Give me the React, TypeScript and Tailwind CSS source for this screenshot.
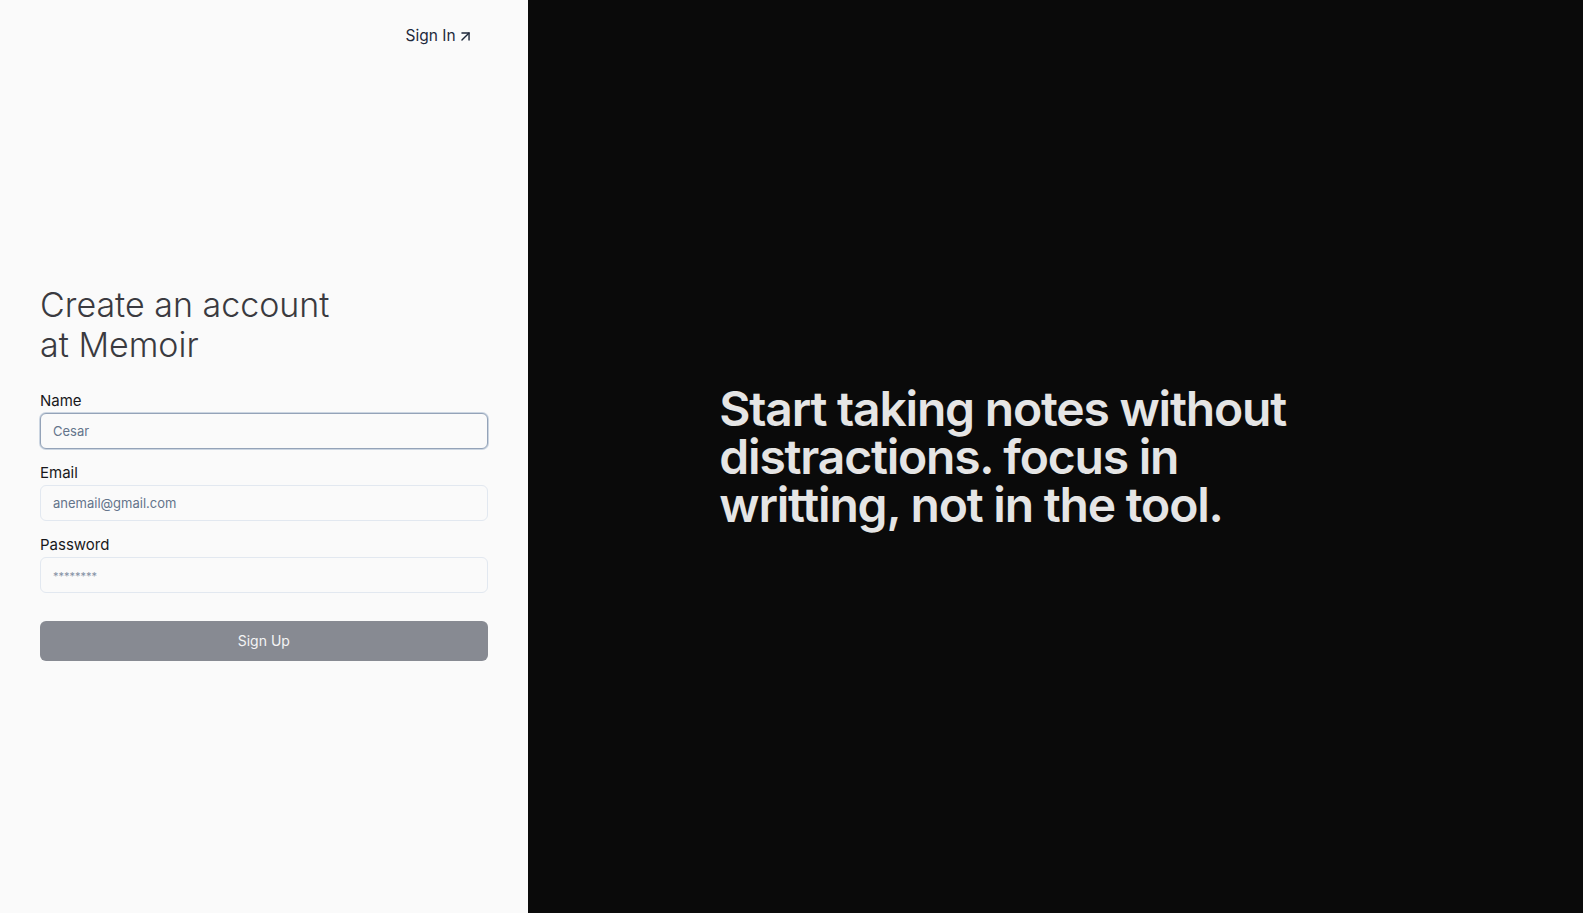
import { ArrowUpRight } from 'lucide-react';

export default function App() {
  return (
    <div className="flex h-[913px] w-full font-['Inter',sans-serif]">
      {/* Left: sign up form */}
      <div className="flex w-1/3 flex-col bg-[#fafafa] px-10">
        <div className="flex justify-end pt-6 pr-[14px]">
          <a href="#" className="flex items-center text-[15.5px] leading-6 text-[#1e293b]">
            Sign In
            <ArrowUpRight size={17} strokeWidth={2} className="ml-px" />
          </a>
        </div>

        <div className="mt-[237px] flex flex-col">
          <h1 className="mb-6 text-[34px] leading-10 font-light text-[#3a3a40]">
            Create an account
            <br />
            at Memoir
          </h1>

          <form className="flex flex-col gap-3" onSubmit={(e) => e.preventDefault()}>
            <label className="flex flex-col">
              <span className="text-[15px] leading-6 text-[#18181b]">Name</span>
              <input
                type="text"
                autoFocus
                placeholder="Cesar"
                className="h-9 rounded-md border border-[#94a3b8] bg-[#fafafa] px-3 text-[13px] text-[#18181b] outline-none ring-1 ring-[#cbd5e1] placeholder:text-[#64748b]"
              />
            </label>
            <label className="flex flex-col">
              <span className="text-[15px] leading-6 text-[#18181b]">Email</span>
              <input
                type="email"
                placeholder="anemail@gmail.com"
                className="h-9 rounded-md border border-[#e2e8f0] bg-[#fafafa] px-3 text-[13px] text-[#18181b] outline-none placeholder:text-[#64748b]"
              />
            </label>
            <label className="flex flex-col">
              <span className="text-[15px] leading-6 text-[#18181b]">Password</span>
              <input
                type="password"
                placeholder="********"
                className="h-9 rounded-md border border-[#e2e8f0] bg-[#fafafa] px-3 text-[13px] text-[#18181b] outline-none placeholder:text-[11px] placeholder:text-[#8390a3]"
              />
            </label>
            <button
              type="submit"
              className="mt-4 h-10 rounded-md bg-[#878a92] text-sm font-normal text-[#f4f4f5]"
            >
              Sign Up
            </button>
          </form>
        </div>
      </div>

      {/* Right: tagline */}
      <div className="flex flex-1 items-center justify-center bg-[#0a0a0a]">
        <p className="w-full max-w-2xl text-5xl leading-[48px] font-semibold tracking-tight text-[#e5e5e5]">
          Start taking notes without
          <br />
          distractions. focus in
          <br />
          writting, not in the tool.
        </p>
      </div>
    </div>
  );
}
